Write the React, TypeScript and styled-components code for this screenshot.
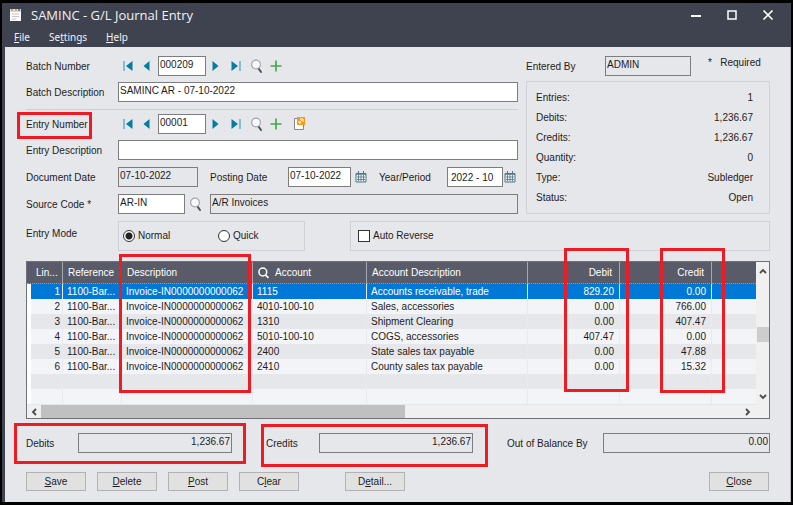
import React from 'react';
import styled, { createGlobalStyle, css } from 'styled-components';

const GlobalStyle = createGlobalStyle`
  * { box-sizing: border-box; }
  body { margin: 0; background: #000; }
  body, button, input {
    font-family: "Liberation Sans", Arial, sans-serif;
    font-size: 10px;
    line-height: 14px;
    color: #1c1c22;
  }
`;

/* ---------- window frame ---------- */

const Frame = styled.div`
  min-height: 100vh;
  display: flex;
  flex-direction: column;
  padding: 3px 2px 3px 2px;
  background: #000;
`;

const Chrome = styled.header`
  background: #3f4350;
  color: #f1f2f5;
  font-family: "Noto Sans", "Open Sans", sans-serif;
`;

const TitleBar = styled.div`
  display: flex;
  align-items: center;
  height: 24px;
  padding: 0 16px 0 7px;
`;

const Title = styled.h1`
  flex: 1;
  margin: 0 0 0 9px;
  font-family: "Open Sans", "Noto Sans", sans-serif;
  font-size: 13px;
  font-weight: 400;
  line-height: 20px;
`;

const WindowButtons = styled.div`
  display: flex;
  gap: 22px;
`;

const IconButton = styled.button`
  display: flex;
  align-items: center;
  justify-content: center;
  flex: none;
  padding: 0;
  border: 0;
  background: none;
  color: inherit;
`;

const MenuBar = styled.nav`
  display: flex;
  gap: 19px;
  height: 20px;
  padding: 0 12px;
`;

const MenuItem = styled.button`
  padding: 0;
  border: 0;
  background: none;
  color: inherit;
  font-family: inherit;
  font-size: 10px;
  line-height: 20px;
`;

const Body = styled.main`
  flex: 1;
  padding: 9px 20px 10px 21px;
  border-left: 3px solid #3f4350;
  border-right: 1px solid #b9bac0;
  background: #e6e7eb;
`;

/* ---------- form ---------- */

const Top = styled.div`
  display: flex;
  gap: 8px;
`;

const LeftColumn = styled.div`
  flex: 1;
  min-width: 0;
`;

const RightColumn = styled.div`
  display: flex;
  flex-direction: column;
  gap: 5px;
  width: 244px;
`;

const Row = styled.div<{ $space?: number }>`
  display: flex;
  align-items: center;
  height: 20px;
  margin-bottom: ${(p) => p.$space ?? 6}px;
`;

const Label = styled.label<{ $w?: number }>`
  position: relative;
  flex: none;
  width: ${(p) => (p.$w ? `${p.$w}px` : 'auto')};
  padding-top: 2px;
  white-space: nowrap;
`;

const Field = styled.input<{ $w?: number; $right?: boolean }>`
  ${(p) => (p.$w ? css`flex: none; width: ${p.$w}px;` : css`flex: 1; width: 0;`)}
  min-width: 0;
  height: 20px;
  margin: 0;
  padding: 0 1px 3px;
  border: 1px solid #7d7d80;
  border-radius: 0;
  outline: 0;
  background: ${(p) => (p.readOnly ? '#e6e7eb' : '#fff')};
  text-align: ${(p) => (p.$right ? 'right' : 'left')};
`;

const PeriodField = styled(Field)`
  padding: 0 3px;
`;

const Finder = styled.div`
  display: flex;
  align-items: center;
  padding-left: 4px;
`;

const NavSlot = styled(IconButton)<{ $w: number }>`
  width: ${(p) => p.$w}px;
  height: 18px;
`;

const SourceFind = styled(NavSlot)`
  margin-right: 5px;
`;

const Rule = styled.hr`
  height: 1px;
  margin: 0 0 4px;
  border: 0;
  background: #cdced4;
`;

const Panel = styled.fieldset`
  min-width: 0;
  margin: 0;
  padding: 0;
  border: 1px solid #cfd0d8;
`;

const Summary = styled(Panel)`
  flex: 1;
  display: grid;
  align-content: space-between;
  padding: 9px 16px 8px 9px;
`;

const SummaryLine = styled.div`
  display: flex;
  justify-content: space-between;
`;

const Required = styled.span`
  margin-left: 17px;
  padding-bottom: 6px;
  white-space: pre;
`;

const Modes = styled.div`
  display: flex;
  gap: 45px;
  margin-top: 7px;
`;

const ModeBox = styled.div`
  display: flex;
  align-items: center;
  width: 279px;
  height: 30px;
`;

const ModeLabel = styled.span`
  width: 92px;
  padding-bottom: 5px;
`;

const Choices = styled(Panel)`
  flex: 1;
  display: flex;
  align-items: center;
  height: 30px;
  padding: 0 4px;
`;

const ReverseBox = styled(Panel)`
  flex: 1;
  display: flex;
  align-items: center;
  height: 30px;
  padding-left: 7px;
`;

const Choice = styled.label<{ $w?: number }>`
  display: flex;
  align-items: center;
  gap: 3px;
  width: ${(p) => (p.$w ? `${p.$w}px` : 'auto')};
`;

const Radio = styled.input`
  appearance: none;
  flex: none;
  width: 12px;
  height: 12px;
  margin: 0;
  border: 1px solid #333;
  border-radius: 50%;
  background: #fff;
  &:checked { background: radial-gradient(circle, #222 3px, #fff 4px); }
`;

const Check = styled.input`
  appearance: none;
  flex: none;
  width: 12px;
  height: 12px;
  margin: 0;
  border: 1px solid #333;
  background: #fff;
`;

/* ---------- journal grid ---------- */

const GridFrame = styled.div`
  display: grid;
  grid-template-columns: 1fr 13px;
  grid-template-rows: auto 13px;
  margin-top: 10px;
  border: 1px solid #707178;
  background: #f0f0f0;
`;

const TableWrap = styled.div`
  position: relative;
  min-width: 0;
  padding-bottom: 1px;
  background: #e6e7eb;
`;

const Table = styled.table`
  width: 100%;
  table-layout: fixed;
  border-collapse: separate;
  border-spacing: 0;
`;

const Th = styled.th<{ $right?: boolean }>`
  height: 22px;
  padding: 1px 7px 0 5px;
  border-right: 1px solid #a5a7ae;
  border-bottom: 1px dotted #e58a3c;
  background: #595c68;
  color: #fff;
  font-weight: 400;
  text-align: ${(p) => (p.$right ? 'right' : 'left')};
  white-space: nowrap;
  &:first-child { padding-left: 9px; padding-right: 0; }
  &:last-child { border-right: 0; }
`;

const AccountHead = styled.span`
  display: flex;
  align-items: center;
  gap: 6px;
`;

const Tr = styled.tr<{ $selected?: boolean }>`
  background: #f3f4f8;
  &:nth-child(odd) { background: #e6e7eb; }
  ${(p) => p.$selected && css`
    && { background: #0078d7; color: #fff; }
  `}
`;

const Td = styled.td<{ $right?: boolean }>`
  height: 15px;
  padding: 0 5px 0 4px;
  border-right: 1px solid #e9eaee;
  line-height: 14px;
  text-align: ${(p) => (p.$right ? 'right' : 'left')};
  white-space: nowrap;
  &:first-child { padding-right: 2px; border-left: 4px solid #fff; }
  &:last-child { border-right: 0; }
`;

const VScroll = styled.div`
  display: flex;
  flex-direction: column;
  align-items: stretch;
  padding: 2px 0;
`;

const VThumb = styled.div`
  height: 15px;
  margin: 50px 0 0 1px;
  background: #cdcdcd;
`;

const HScroll = styled.div`
  display: flex;
  padding-right: 1px;
`;

const HTrack = styled.div`
  flex: 1;
`;

const HThumb = styled.div`
  width: 52%;
  height: 13px;
  background: #c0c0c0;
`;

const Arrow = styled(IconButton)`
  width: 14px;
  height: 13px;
  color: #4a4a4a;
`;

const Spacer = styled.span`
  flex: 1;
`;

/* ---------- totals and actions ---------- */

const Totals = styled.div`
  display: flex;
  gap: 34px;
  margin-top: 14px;
`;

const Total = styled.div<{ $w?: number }>`
  position: relative;
  display: flex;
  align-items: center;
  ${(p) => (p.$w ? css`flex: none; width: ${p.$w}px;` : css`flex: 1;`)}
`;

const Actions = styled.div`
  display: flex;
  gap: 11px;
  margin-top: 19px;
  padding-right: 1px;
`;

const Action = styled.button`
  width: 60px;
  height: 19px;
  padding: 0;
  border: 1px solid #b1b2b4;
  background: #e1e1e1;
`;

const DetailAction = styled(Action)`
  margin-left: 35px;
`;

/* ---------- highlight frames laid over the form ---------- */

const Mark = styled.span`
  position: absolute;
  z-index: 1;
  border: 3px solid #ed1c24;
  pointer-events: none;
`;
const EntryMark = styled(Mark)`inset: -4px 0 -7px -9px; width: 75px;`;
const DescriptionMark = styled(Mark)`top: -8px; bottom: 12px; left: 92px; width: 132px;`;
const DebitMark = styled(Mark)`top: -14px; bottom: 13px; right: 127px; width: 65px;`;
const CreditMark = styled(Mark)`top: -14px; bottom: 12px; right: 31px; width: 65px;`;
const DebitsMark = styled(Mark)`inset: -10px -14px -11px -12px;`;
const CreditsMark = styled(Mark)`inset: -9px -15px -14px -5px;`;

/* ---------- icons ---------- */

const AppIcon = () => (
  <svg width="13" height="14" viewBox="0 0 13 14">
    <rect x="1" y="1" width="11" height="12" fill="#fbfbfb" />
    <path d="M1 1h11v3H1z" fill="#d6dbe2" />
    <path d="M2 1h2v2H2zM6 1h2v2H6z" fill="#e7a13c" />
    <path d="M9 1h2v2H9z" fill="#3f8ed0" />
    <path d="M3 6h7M3 8.500h7M3 11h4" stroke="#c3c7cd" />
  </svg>
);

const First = () => (
  <svg width="10" height="12" viewBox="0 0 10 12">
    <path d="M1 1v10" stroke="#45a0bb" strokeWidth="1.2" />
    <path d="M9.500 1v10L3 6z" fill="#067c9e" />
  </svg>
);
const Last = () => (
  <svg width="10" height="12" viewBox="0 0 10 12">
    <path d="M9 1v10" stroke="#45a0bb" strokeWidth="1.2" />
    <path d="M.5 1v10L7 6z" fill="#067c9e" />
  </svg>
);
const Prev = () => (
  <svg width="7" height="12" viewBox="0 0 7 12">
    <path d="M6.500 1v10L.5 6z" fill="#067c9e" />
  </svg>
);
const Next = () => (
  <svg width="7" height="12" viewBox="0 0 7 12">
    <path d="M.5 1v10l6-5z" fill="#067c9e" />
  </svg>
);
const Find = () => (
  <svg width="13" height="15" viewBox="0 0 13 15">
    <path d="M8.500 9.500l2.500 3.500" stroke="#4c4f58" strokeWidth="2" strokeLinecap="round" />
    <circle cx="6" cy="5.500" r="4.400" fill="#f8f9fc" stroke="#a3a6ad" strokeWidth="1.200" />
  </svg>
);
const Plus = () => (
  <svg width="12" height="12" viewBox="0 0 12 12">
    <path d="M6 .5v11M.5 6h11" stroke="#42ab49" strokeWidth="1.700" />
  </svg>
);
const Drill = () => (
  <svg width="12" height="14" viewBox="0 0 12 14">
    <path d="M1.500 1.500h9v11h-9z" fill="#fff" stroke="#85878c" />
    <path d="M4 0h8v8H4z" fill="#f7981d" />
    <path d="M6 6l3.500-3.500M7 2h3v3M6 3.800V6h2.200" stroke="#fff" fill="none" />
  </svg>
);
const CalendarIcon = () => (
  <svg width="12" height="12" viewBox="0 0 12 12">
    <path d="M1 2.500h10v8.500H1z" fill="#eef4f6" stroke="#4d7785" />
    <path d="M1 3h10" stroke="#4d7785" strokeWidth="1.500" />
    <path d="M3.500 0v3M8.500 0v3" stroke="#4d7785" />
    <path d="M3.500 4v6.500M6 4v6.500M8.500 4v6.500M2 6h8M2 8.500h8" stroke="#4d7785" strokeWidth=".8" />
  </svg>
);
const HeadSearch = () => (
  <svg width="11" height="12" viewBox="0 0 11 12">
    <circle cx="4.800" cy="5" r="3.900" fill="none" stroke="#fff" strokeWidth="1.500" />
    <path d="M7.500 8l3 3" stroke="#fff" strokeWidth="1.700" />
  </svg>
);
const Chevron = ({ d }: { d: string }) => (
  <svg width="8" height="8" viewBox="0 0 8 8">
    <path d={d} fill="none" stroke="currentColor" strokeWidth="1.800" />
  </svg>
);

/* ---------- data ---------- */

const lines = [
  ['1115', 'Accounts receivable, trade', '829.20', '0.00'],
  ['4010-100-10', 'Sales, accessories', '0.00', '766.00'],
  ['1310', 'Shipment Clearing', '0.00', '407.47'],
  ['5010-100-10', 'COGS, accessories', '407.47', '0.00'],
  ['2400', 'State sales tax payable', '0.00', '47.88'],
  ['2410', 'County sales tax payable', '0.00', '15.32'],
];

const summary = [
  ['Entries:', '1'],
  ['Debits:', '1,236.67'],
  ['Credits:', '1,236.67'],
  ['Quantity:', '0'],
  ['Type:', 'Subledger'],
  ['Status:', 'Open'],
];

const columnWidths = [36, 59, 131, 114, 0, 92, 92, 44];

function Navigator({ id, value, drill }: { id: string; value: string; drill?: boolean }) {
  return (
    <Finder>
      <NavSlot $w={12} aria-label="First"><First /></NavSlot>
      <NavSlot $w={24} aria-label="Previous"><Prev /></NavSlot>
      <Field id={id} $w={48} defaultValue={value} />
      <NavSlot $w={19} aria-label="Next"><Next /></NavSlot>
      <NavSlot $w={21} aria-label="Last"><Last /></NavSlot>
      <NavSlot $w={20} aria-label="Find"><Find /></NavSlot>
      <NavSlot $w={20} aria-label="New"><Plus /></NavSlot>
      {drill && <NavSlot $w={26} aria-label="Drill down"><Drill /></NavSlot>}
    </Finder>
  );
}

export default function App() {
  return (
    <Frame>
      <GlobalStyle />
      <Chrome>
        <TitleBar>
          <AppIcon />
          <Title>SAMINC - G/L Journal Entry</Title>
          <WindowButtons>
            <IconButton aria-label="Minimize">
              <svg width="14" height="14"><path d="M2 8h10" stroke="#fff" strokeWidth="2" /></svg>
            </IconButton>
            <IconButton aria-label="Maximize">
              <svg width="14" height="14"><path d="M3 3h8v8H3z" fill="none" stroke="#fff" strokeWidth="1.500" /></svg>
            </IconButton>
            <IconButton aria-label="Close window">
              <svg width="14" height="14"><path d="M2.500 2.500l9 9M11.500 2.500l-9 9" stroke="#fff" strokeWidth="1.700" /></svg>
            </IconButton>
          </WindowButtons>
        </TitleBar>
        <MenuBar>
          <MenuItem><u>F</u>ile</MenuItem>
          <MenuItem>Se<u>t</u>tings</MenuItem>
          <MenuItem><u>H</u>elp</MenuItem>
        </MenuBar>
      </Chrome>

      <Body>
        <Top>
          <LeftColumn>
            <Row>
              <Label $w={92} htmlFor="batch">Batch Number</Label>
              <Navigator id="batch" value="000209" />
            </Row>
            <Row $space={7}>
              <Label $w={92} htmlFor="batch-desc">Batch Description</Label>
              <Field id="batch-desc" defaultValue="SAMINC AR - 07-10-2022" />
            </Row>
            <Rule />
            <Row>
              <Label $w={92} htmlFor="entry">Entry Number<EntryMark /></Label>
              <Navigator id="entry" value="00001" drill />
            </Row>
            <Row $space={7}>
              <Label $w={92} htmlFor="entry-desc">Entry Description</Label>
              <Field id="entry-desc" defaultValue="" />
            </Row>
            <Row $space={7}>
              <Label $w={92} htmlFor="doc-date">Document Date</Label>
              <Field id="doc-date" $w={80} readOnly value="07-10-2022" />
              <NavSlot $w={12} as="span" />
              <Label $w={78} htmlFor="post-date">Posting Date</Label>
              <Field id="post-date" $w={63} defaultValue="07-10-2022" />
              <NavSlot $w={20} aria-label="Pick posting date"><CalendarIcon /></NavSlot>
              <NavSlot $w={8} as="span" />
              <Label $w={68} htmlFor="period">Year/Period</Label>
              <PeriodField id="period" $w={56} defaultValue="2022 - 10" />
              <NavSlot $w={13} aria-label="Pick period"><CalendarIcon /></NavSlot>
            </Row>
            <Row $space={0}>
              <Label $w={92} htmlFor="source">Source Code *</Label>
              <Field id="source" $w={67} defaultValue="AR-IN" />
              <SourceFind $w={20} aria-label="Find source code"><Find /></SourceFind>
              <Field aria-label="Source description" readOnly value="A/R Invoices" />
            </Row>
          </LeftColumn>

          <RightColumn>
            <Row $space={0}>
              <Label $w={79} htmlFor="entered-by">Entered By</Label>
              <Field id="entered-by" $w={86} readOnly value="ADMIN" />
              <Required>{'*   Required'}</Required>
            </Row>
            <Summary>
              {summary.map(([name, value]) => (
                <SummaryLine key={name}>
                  <span>{name}</span>
                  <span>{value}</span>
                </SummaryLine>
              ))}
            </Summary>
          </RightColumn>
        </Top>

        <Modes>
          <ModeBox>
            <ModeLabel>Entry Mode</ModeLabel>
            <Choices aria-label="Entry Mode">
              <Choice $w={95}><Radio type="radio" name="mode" defaultChecked />Normal</Choice>
              <Choice><Radio type="radio" name="mode" />Quick</Choice>
            </Choices>
          </ModeBox>
          <ReverseBox>
            <Choice><Check type="checkbox" />Auto Reverse</Choice>
          </ReverseBox>
        </Modes>

        <GridFrame>
          <TableWrap>
            <Table>
              <colgroup>
                {columnWidths.map((w, i) => <col key={i} width={w || undefined} />)}
              </colgroup>
              <thead>
                <tr>
                  <Th>Lin...</Th>
                  <Th>Reference</Th>
                  <Th>Description</Th>
                  <Th><AccountHead><HeadSearch />Account</AccountHead></Th>
                  <Th>Account Description</Th>
                  <Th $right>Debit</Th>
                  <Th $right>Credit</Th>
                  <Th />
                </tr>
              </thead>
              <tbody>
                {lines.map(([account, name, debit, credit], i) => (
                  <Tr key={account} $selected={i === 0}>
                    <Td $right>{i + 1}</Td>
                    <Td>1100-Bar...</Td>
                    <Td>Invoice-IN0000000000062</Td>
                    <Td>{account}</Td>
                    <Td>{name}</Td>
                    <Td $right>{debit}</Td>
                    <Td $right>{credit}</Td>
                    <Td />
                  </Tr>
                ))}
                {[7, 8].map((n) => (
                  <Tr key={n}>
                    {columnWidths.map((_, i) => <Td key={i} />)}
                  </Tr>
                ))}
              </tbody>
            </Table>
            <DescriptionMark />
            <DebitMark />
            <CreditMark />
          </TableWrap>
          <VScroll>
            <Arrow aria-label="Scroll up"><Chevron d="M1 6l3-3 3 3" /></Arrow>
            <VThumb />
            <Spacer />
            <Arrow aria-label="Scroll down"><Chevron d="M1 2l3 3 3-3" /></Arrow>
          </VScroll>
          <HScroll>
            <Arrow aria-label="Scroll left"><Chevron d="M6 1L3 4l3 3" /></Arrow>
            <HTrack><HThumb /></HTrack>
            <Arrow aria-label="Scroll right"><Chevron d="M2 1l3 3-3 3" /></Arrow>
          </HScroll>
        </GridFrame>

        <Totals>
          <Total $w={206}>
            <Label $w={52} htmlFor="debits">Debits</Label>
            <Field id="debits" $right readOnly value="1,236.67" />
            <DebitsMark />
          </Total>
          <Total $w={207}>
            <Label $w={53} htmlFor="credits">Credits</Label>
            <Field id="credits" $right readOnly value="1,236.67" />
            <CreditsMark />
          </Total>
          <Total>
            <Label $w={96} htmlFor="balance">Out of Balance By</Label>
            <Field id="balance" $right readOnly value="0.00" />
          </Total>
        </Totals>

        <Actions>
          <Action><u>S</u>ave</Action>
          <Action><u>D</u>elete</Action>
          <Action><u>P</u>ost</Action>
          <Action>C<u>l</u>ear</Action>
          <DetailAction>D<u>e</u>tail...</DetailAction>
          <Spacer />
          <Action><u>C</u>lose</Action>
        </Actions>
      </Body>
    </Frame>
  );
}
